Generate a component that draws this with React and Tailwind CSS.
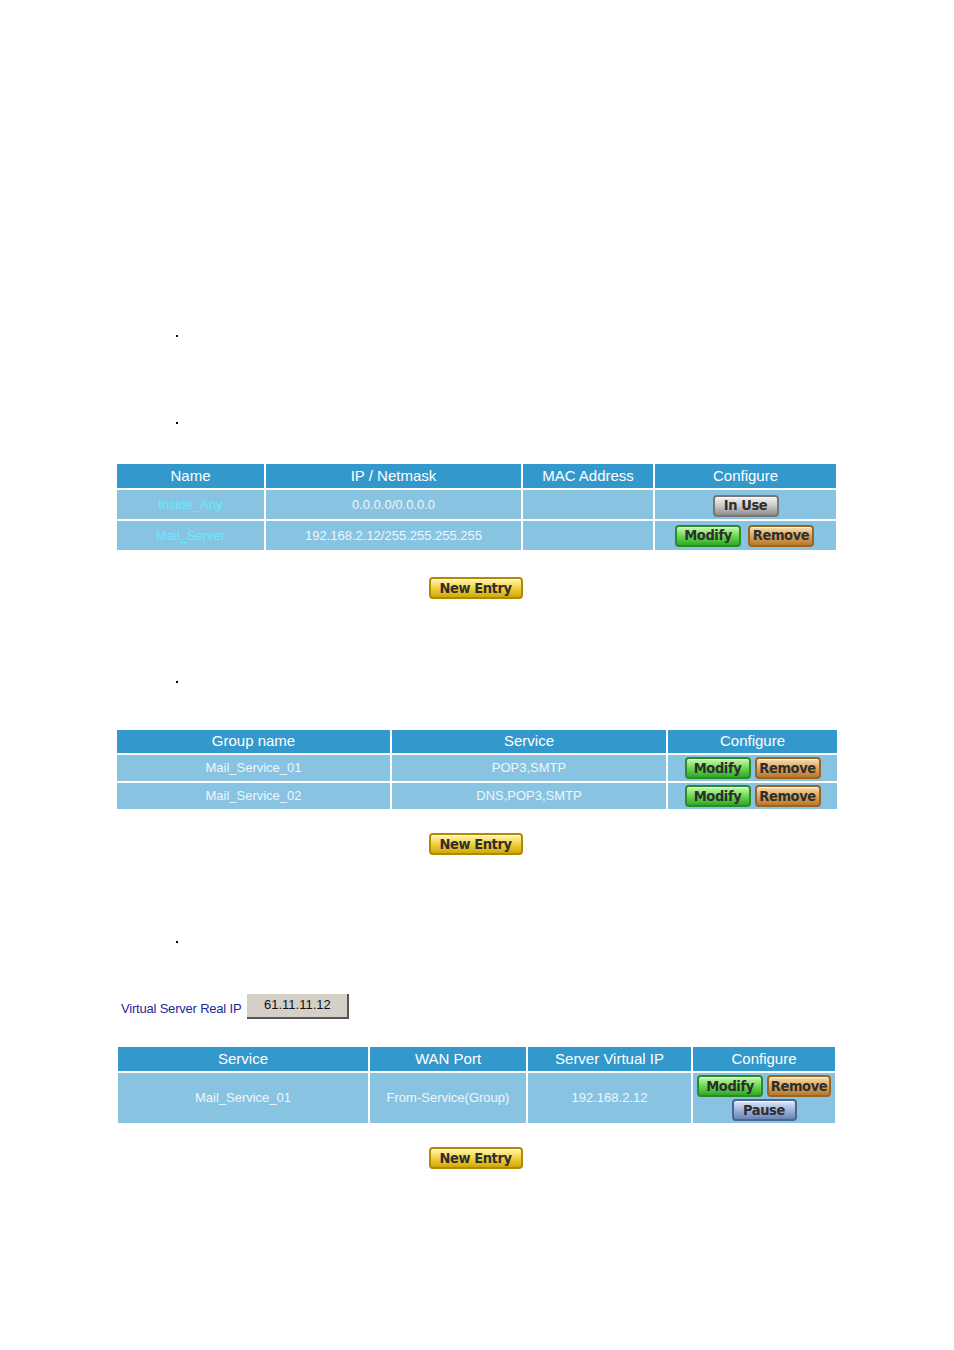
import React from 'react';

const arial = { fontFamily: '"Liberation Sans", Arial, sans-serif' };

// Glossy pill buttons from the old router UI
const btnStyles = {
  modify: 'bg-gradient-to-b from-[#c8f8b0] via-[#6bd84e] to-[#2fa82a] border-[#2c8a2a]',
  remove: 'bg-gradient-to-b from-[#f6deb0] via-[#d9a660] to-[#b77a2c] border-[#9a6520]',
  inuse: 'bg-gradient-to-b from-[#f4f4f4] via-[#c8c8c8] to-[#8e8e8e] border-[#777777]',
  pause: 'bg-gradient-to-b from-[#dde8f8] via-[#9fb6dc] to-[#6a84b4] border-[#4c6690]',
  entry: 'bg-gradient-to-b from-[#fff6b0] via-[#f2d23c] to-[#d0a800] border-[#b08a00]',
};

const Btn = ({ kind, children, w = 'w-[66px]' }) => (
  <span
    className={`inline-flex items-center justify-center ${w} h-[22px] rounded-[4px] border-2 ${btnStyles[kind]} text-[#2e2e2e] text-[14.5px] font-bold leading-none shadow-[inset_0_1px_0_rgba(255,255,255,0.7)]`}
    style={{ fontFamily: '"DejaVu Sans Condensed", "DejaVu Sans", sans-serif', letterSpacing: '-0.4px' }}
  >
    {children}
  </span>
);

const NewEntry = () => (
  <div className="flex justify-center">
    <span className="ml-[-3px]">
      <Btn kind="entry" w="w-[94px]">New Entry</Btn>
    </span>
  </div>
);

const Dot = ({ mt }) => (
  <div className={`${mt} pl-[176px]`}>
    <div className="w-[2px] h-[2px] bg-black" />
  </div>
);

const Head = ({ children }) => (
  <div className="bg-[#3399cc] text-white text-[15px] flex items-center justify-center">{children}</div>
);

const Cell = ({ children, cyan }) => (
  <div className={`bg-[#88c4e2] text-[13px] flex items-center justify-center ${cyan ? 'text-[#66eaff]' : 'text-[#eef6fb]'}`}>
    {children}
  </div>
);

const App = () => {
  return (
    <div className="w-[954px] h-[1350px] bg-white" style={arial}>
      <Dot mt="pt-[335px]" />
      <Dot mt="mt-[85px]" />

      {/* Address table */}
      <div className="mt-[40px] ml-[117px] w-[719px] grid grid-cols-[147px_255px_130px_181px] grid-rows-[24px_29px_29px] gap-[2px]">
        <Head>Name</Head>
        <Head>IP / Netmask</Head>
        <Head>MAC Address</Head>
        <Head>Configure</Head>
        <Cell cyan>Inside_Any</Cell>
        <Cell>0.0.0.0/0.0.0.0</Cell>
        <Cell />
        <Cell>
          <span className="mt-[2px]"><Btn kind="inuse">In Use</Btn></span>
        </Cell>
        <Cell cyan>Mail_Server</Cell>
        <Cell>192.168.2.12/255.255.255.255</Cell>
        <Cell />
        <Cell>
          <div className="flex gap-[7px] ml-[-2px]">
            <Btn kind="modify">Modify</Btn>
            <Btn kind="remove">Remove</Btn>
          </div>
        </Cell>
      </div>

      <div className="mt-[26px]">
        <NewEntry />
      </div>

      <Dot mt="mt-[81px]" />

      {/* Service group table */}
      <div className="mt-[47px] ml-[117px] w-[720px] grid grid-cols-[273px_274px_169px] grid-rows-[23px_26px_26px] gap-[2px]">
        <Head>Group name</Head>
        <Head>Service</Head>
        <Head>Configure</Head>
        <Cell>Mail_Service_01</Cell>
        <Cell>POP3,SMTP</Cell>
        <Cell>
          <div className="flex gap-[4px]">
            <Btn kind="modify">Modify</Btn>
            <Btn kind="remove">Remove</Btn>
          </div>
        </Cell>
        <Cell>Mail_Service_02</Cell>
        <Cell>DNS,POP3,SMTP</Cell>
        <Cell>
          <div className="flex gap-[4px]">
            <Btn kind="modify">Modify</Btn>
            <Btn kind="remove">Remove</Btn>
          </div>
        </Cell>
      </div>

      <div className="mt-[23px]">
        <NewEntry />
      </div>

      <Dot mt="mt-[85px]" />

      {/* Virtual server real IP */}
      <div className="mt-[51px] ml-[121px] flex items-end">
        <span className="text-[13px] text-[#1a2a9a] mb-[1px] tracking-[-0.2px]">Virtual Server Real IP</span>
        <span className="ml-[6px] w-[102px] h-[25px] bg-[#d4d0c8] border-r-2 border-b-2 border-[#555] text-[13px] text-[#111] flex items-center justify-center pb-[2px]">
          61.11.11.12
        </span>
      </div>

      {/* Virtual server table */}
      <div className="mt-[28px] ml-[118px] w-[717px] grid grid-cols-[250px_156px_163px_142px] grid-rows-[24px_50px] gap-[2px]">
        <Head>Service</Head>
        <Head>WAN Port</Head>
        <Head>Server Virtual IP</Head>
        <Head>Configure</Head>
        <Cell>Mail_Service_01</Cell>
        <Cell>From-Service(Group)</Cell>
        <Cell>192.168.2.12</Cell>
        <Cell>
          <div className="flex flex-col items-center gap-[2px]">
            <div className="flex gap-[4px]">
              <Btn kind="modify">Modify</Btn>
              <Btn kind="remove" w="w-[64px]">Remove</Btn>
            </div>
            <Btn kind="pause" w="w-[65px]">Pause</Btn>
          </div>
        </Cell>
      </div>

      <div className="mt-[23px]">
        <NewEntry />
      </div>
    </div>
  );
};

export default App;
